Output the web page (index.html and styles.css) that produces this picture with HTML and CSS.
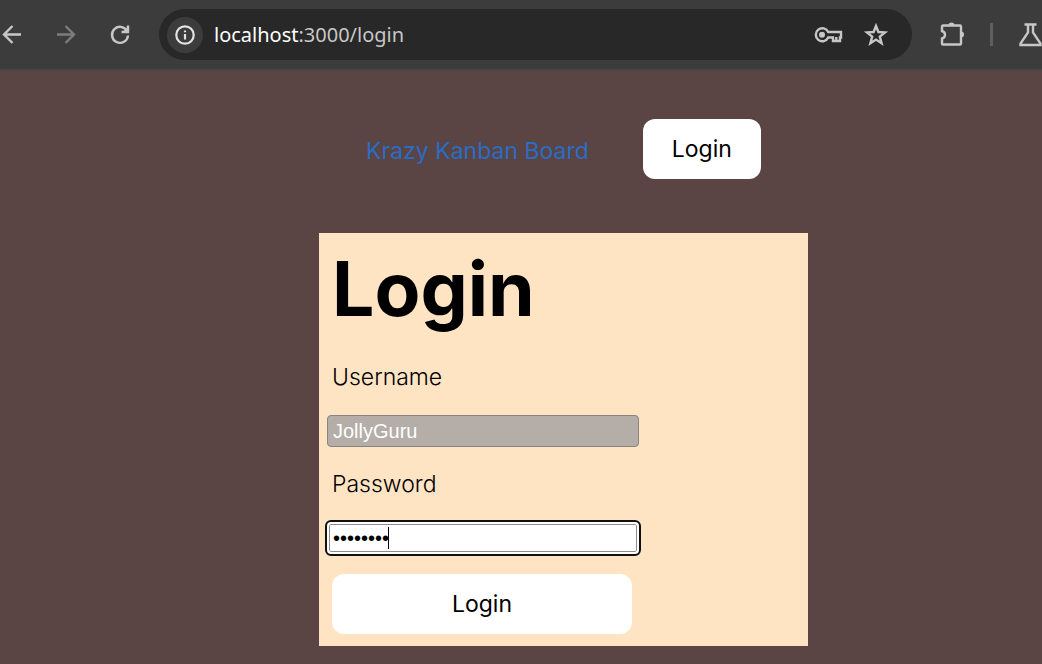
FILE: index.html
```html
<!DOCTYPE html>
<html lang="en">
<head>
<meta charset="utf-8">
<title>Krazy Kanban Board</title>
<link rel="stylesheet" href="styles.css">
</head>
<body>
<div class="toolbar">
  <div class="nav-buttons">
    <button class="icon-button" aria-label="Back"><svg viewBox="0 0 24 24"><path d="M21 11.500H4.500M12.500 3L4 11.500l8.500 8.500"/></svg></button>
    <button class="icon-button dim" aria-label="Forward"><svg viewBox="0 0 24 24"><path d="M3 11.500h16.500M11.500 3L20 11.500 11.500 20"/></svg></button>
    <button class="icon-button" aria-label="Reload"><svg viewBox="0 0 24 24"><path d="M19.500 9A8 8 0 1 0 20 12.500M20 2.500v6.500h-6.500"/><path class="solid" d="M20.500 3v6.500h-6.500z"/></svg></button>
  </div>
  <div class="address-bar">
    <button class="site-info" aria-label="Site information"><svg viewBox="0 0 24 24"><circle cx="12" cy="12" r="9.500"/><path d="M12 11v6M12 7v2"/></svg></button>
    <span class="url"><span class="host">localhost</span>:3000/login</span>
    <button class="icon-button key" aria-label="Passwords"><svg viewBox="0 0 28 24"><path d="M14.200 9A6.500 6.500 0 1 0 14.200 14.500H19v3.500h7v-3.500h1V9z"/><path d="M22.300 18v-4"/><circle class="solid" cx="8" cy="11.800" r="3"/></svg></button>
    <button class="icon-button" aria-label="Bookmark"><svg viewBox="0 0 24 24"><path d="M12 3l2.400 6 6.600.4-5.200 4.200 1.800 6.700-5.600-3.700-5.600 3.700 1.800-6.700L3 9.400 9.600 9z"/></svg></button>
  </div>
  <div class="extras">
    <button class="icon-button" aria-label="Extensions"><svg class="puzzle" viewBox="0 0 24 24"><path d="M3 2.500h17a1 1 0 0 1 1 1v17a1 1 0 0 1-1 1H3a1 1 0 0 1-1-1V15.500c4-1 4-6.500 0-7.500V3.500a1 1 0 0 1 1-1z"/><path class="solid" d="M8.500 2.500a3 3 0 0 1 6 0zM21 8.500a3 3 0 0 1 0 6z"/></svg></button>
    <span class="divider"></span>
    <button class="icon-button" aria-label="Labs"><svg viewBox="0 0 24 24"><path d="M5.500 1.500h12M9 1.500v8L1.500 20.500V22h20v-1.500L14 9.500v-8"/></svg></button>
  </div>
</div>
<div class="page">
  <header class="site-header">
    <a class="brand" href="#">Krazy Kanban Board</a>
    <button class="button">Login</button>
  </header>
  <main class="panel">
    <form class="login-form">
      <h1 class="title">Login</h1>
      <label class="label" for="username">Username</label>
      <input class="field" id="username" type="text" value="JollyGuru">
      <label class="label" for="password">Password</label>
      <div class="password-wrap">
        <input class="field focused" id="password" type="password" value="password">
        <span class="caret"></span>
      </div>
      <button class="button submit" type="button">Login</button>
    </form>
  </main>
</div>
</body>
</html>
```
FILE: styles.css
```css
* {
  box-sizing: border-box;
}

body {
  margin: 0;
  min-height: 100vh;
  overflow-x: hidden;
  background: #5a4544;
  color: #000;
  font-family: Inter, "Liberation Sans", sans-serif;
  font-size: 23px;
}

button {
  border: 0;
  font: inherit;
  cursor: pointer;
}

.toolbar {
  display: flex;
  align-items: center;
  height: 71px;
  background: #3c3c3c;
  border-bottom: 2px solid #474747;
}

.nav-buttons {
  display: flex;
  gap: 30px;
  margin-right: 27px;
}

.icon-button {
  flex: none;
  width: 24px;
  height: 24px;
  padding: 0;
  background: none;
  color: #c7c7c7;
}

.icon-button.dim {
  color: #7c7c7c;
}

.icon-button.key {
  width: 28px;
}

svg {
  display: block;
  width: 100%;
  height: 100%;
  overflow: visible;
  fill: none;
  stroke: currentColor;
  stroke-width: 2.4;
}

.solid {
  fill: currentColor;
  stroke: none;
}

.address-bar {
  flex: 1;
  display: flex;
  align-items: center;
  height: 51px;
  padding: 0 24px 0 8px;
  border-radius: 26px;
  background: #282828;
}

.site-info {
  width: 36px;
  height: 36px;
  padding: 7px;
  border-radius: 50%;
  background: #3c3c3c;
  color: #e3e3e3;
}

.url {
  flex: 1;
  margin-left: 11px;
  color: #c7c7c7;
  font: 20px "Noto Sans", "Open Sans", sans-serif;
}

.host {
  color: #fff;
}

.key {
  margin-right: 22px;
}

.extras {
  display: flex;
  align-items: center;
  gap: 26px;
  margin-left: 28px;
  margin-right: -1px;
}

.divider {
  width: 3px;
  height: 23px;
  background: #5e5e5e;
}

.page {
  display: flex;
  flex-direction: column;
  align-items: center;
  padding: 48px 0 18px 85px;
}

.site-header {
  display: flex;
  align-items: center;
  gap: 54px;
  margin-bottom: 54px;
}

.brand {
  padding-top: 4px;
  color: #2b6cc4;
  text-decoration: none;
}

.button {
  height: 60px;
  padding: 0 29px;
  border-radius: 12px;
  background: #fff;
  color: #000;
}

.panel {
  width: 489px;
  max-width: 100%;
  padding: 13px 13px 12px;
  background: #ffe4c4;
}

.login-form {
  display: flex;
  flex-direction: column;
  align-items: flex-start;
  gap: 20px;
}

.title {
  margin: 0;
  padding-bottom: 8px;
  font-size: 75px;
  line-height: 86px;
}

.label {
  line-height: 35px;
  font-weight: 300;
}

.field {
  display: block;
  width: 312px;
  height: 32px;
  margin-left: -5px;
  padding: 0 5px;
  border: 1px solid #858585;
  border-radius: 4px;
  background: #b5ada7;
  color: #fff;
  font: 20px "Liberation Sans", Arial, sans-serif;
}

.field.focused {
  padding: 0 4px;
  border: 2px solid #fff;
  outline: 2px solid #101010;
  box-shadow: inset 0 0 0 1px #8c8c8c;
  background: #fff;
  color: #000;
  caret-color: transparent;
}

.password-wrap {
  position: relative;
}

.caret {
  position: absolute;
  left: 56px;
  top: 5px;
  width: 1px;
  height: 22px;
  background: #000;
}

.submit {
  width: 300px;
}
```
